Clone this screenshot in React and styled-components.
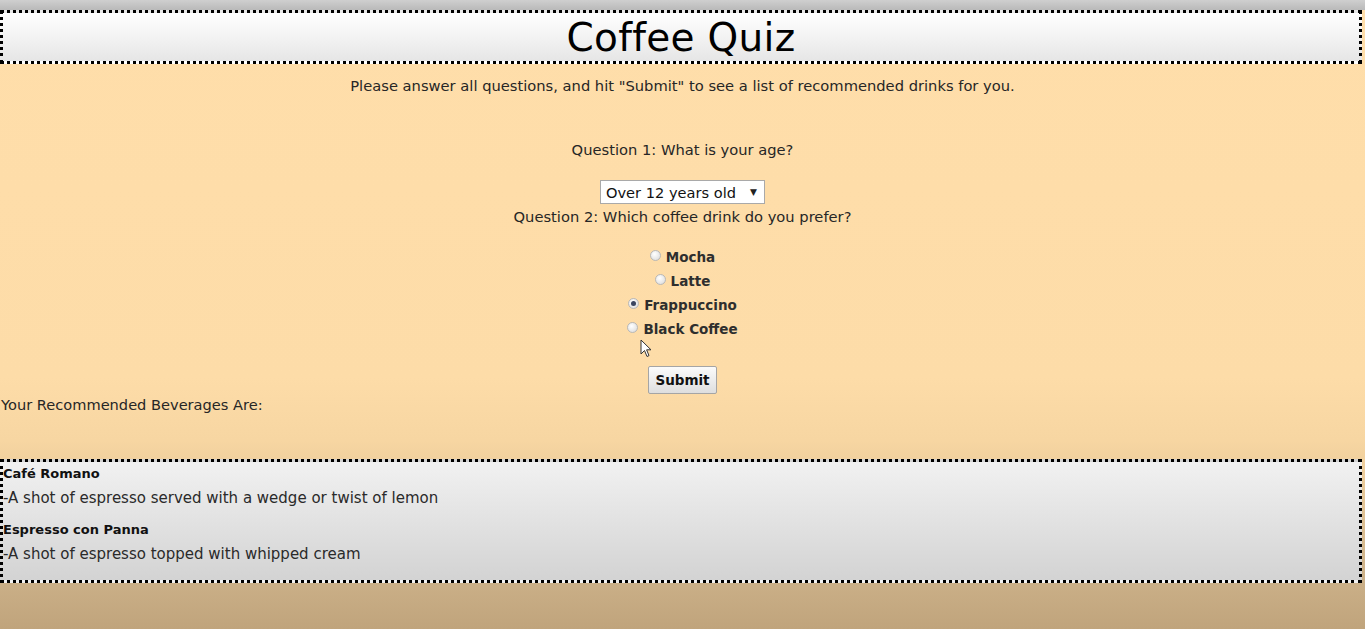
import React from "react";
import styled, { createGlobalStyle } from "styled-components";

const GlobalStyle = createGlobalStyle`
  html, body {
    margin: 0;
    padding: 0;
  }
  body {
    font-family: "DejaVu Sans", "Noto Sans", sans-serif;
    color: #262626;
    background: #c4a982;
  }
`;

const Page = styled.div`
  width: 1365px;
  height: 629px;
  overflow: hidden;
  position: relative;
  background: linear-gradient(
    #ffdeaa 0%,
    #fddca8 60%,
    #f7d6a2 70%,
    #cbb088 92%,
    #c0a47c 100%
  );
`;

const ChromeStrip = styled.div`
  height: 10px;
  background: linear-gradient(#cfcfcf, #b9b9b9);
`;

const Banner = styled.header`
  width: calc(100% - 9px);
  height: 48px;
  border: 3px dotted #000;
  background: linear-gradient(#ffffff, #e6e6e6);
  display: flex;
  justify-content: center;
  align-items: center;
`;

const Title = styled.h1`
  margin: 0;
  font-weight: normal;
  font-size: 39px;
  color: #000;
  letter-spacing: 0.3px;
`;

const Intro = styled.p`
  margin: 12px 0 0;
  text-align: center;
  font-size: 14.7px;
  line-height: 20px;
`;

const Quiz = styled.form`
  display: flex;
  flex-direction: column;
  align-items: center;
  margin-top: 44px;
`;

const Question = styled.div`
  font-size: 14.7px;
  line-height: 20px;
`;

const AgeSelect = styled.div`
  margin-top: 20px;
  width: 165px;
  height: 24px;
  box-sizing: border-box;
  border: 1px solid #a9a9a9;
  background: #fff;
  display: flex;
  align-items: center;
  justify-content: space-between;
  padding: 0 7px 0 5px;
  font-size: 14.6px;
  color: #111;
  margin-bottom: 3px;
`;

const Arrow = styled.span`
  font-size: 9px;
  color: #222;
`;

const Choices = styled.div`
  display: flex;
  flex-direction: column;
  align-items: center;
  margin-top: 18px;
`;

const Choice = styled.label`
  display: flex;
  align-items: center;
  gap: 5px;
  height: 24px;
  font-size: 13.5px;
  font-weight: bold;
  color: #2e2e2e;
`;

const Radio = styled.span`
  width: 11px;
  height: 11px;
  border-radius: 50%;
  box-sizing: border-box;
  border: 1px solid #b8b8b8;
  background: radial-gradient(circle at 40% 35%, #ffffff, #d8d8d8);
  display: flex;
  align-items: center;
  justify-content: center;
  margin-top: -3px;
  &::after {
    content: "";
    width: 5px;
    height: 5px;
    border-radius: 50%;
    background: ${(p) => (p.checked ? "#3a4560" : "transparent")};
  }
`;

const SubmitButton = styled.button`
  margin-top: 25px;
  width: 69px;
  height: 28px;
  border: 1px solid #a5a5a5;
  border-radius: 2px;
  background: linear-gradient(#fbfbfb, #dedede);
  font-family: inherit;
  font-size: 13.5px;
  font-weight: bold;
  color: #111;
  padding: 0;
`;

const ResultsLabel = styled.div`
  margin-top: 1px;
  font-size: 14.6px;
  line-height: 20px;
  padding-left: 1px;
`;

const Results = styled.section`
  margin-top: 44px;
  width: calc(100% - 9px);
  height: 114px;
  border: 3px dotted #000;
  background: linear-gradient(#f1f1f1, #d3d3d3);
  display: flex;
  flex-direction: column;
  padding-top: 4px;
  box-sizing: content-box;
`;

const Drink = styled.div`
  margin-bottom: 14px;
`;

const DrinkName = styled.div`
  font-size: 13px;
  font-weight: bold;
  color: #111;
  line-height: 16px;
`;

const DrinkDesc = styled.div`
  font-size: 15px;
  color: #2a2a2a;
  line-height: 20px;
  margin-top: 6px;
`;

const Cursor = styled.svg`
  position: absolute;
  left: 640px;
  top: 339px;
`;

const drinks = [
  { name: "Café Romano", desc: "-A shot of espresso served with a wedge or twist of lemon" },
  { name: "Espresso con Panna", desc: "-A shot of espresso topped with whipped cream" },
];

const options = [
  { label: "Mocha", checked: false },
  { label: "Latte", checked: false },
  { label: "Frappuccino", checked: true },
  { label: "Black Coffee", checked: false },
];

export default function App() {
  return (
    <Page>
      <GlobalStyle />
      <ChromeStrip />
      <Banner>
        <Title>Coffee Quiz</Title>
      </Banner>
      <Intro>
        Please answer all questions, and hit "Submit" to see a list of recommended drinks for you.
      </Intro>
      <Quiz onSubmit={(e) => e.preventDefault()}>
        <Question>Question 1: What is your age?</Question>
        <AgeSelect>
          <span>Over 12 years old</span>
          <Arrow>▼</Arrow>
        </AgeSelect>
        <Question>Question 2: Which coffee drink do you prefer?</Question>
        <Choices>
          {options.map((o) => (
            <Choice key={o.label}>
              <Radio checked={o.checked} />
              {o.label}
            </Choice>
          ))}
        </Choices>
        <SubmitButton type="submit">Submit</SubmitButton>
      </Quiz>
      <ResultsLabel>Your Recommended Beverages Are:</ResultsLabel>
      <Results>
        {drinks.map((d) => (
          <Drink key={d.name}>
            <DrinkName>{d.name}</DrinkName>
            <DrinkDesc>{d.desc}</DrinkDesc>
          </Drink>
        ))}
      </Results>
      <Cursor width="12" height="19" viewBox="0 0 12 19">
        <path d="M1 1 L1 15 L4.5 11.5 L7 17.5 L9 16.6 L6.6 10.8 L11 10.8 Z" fill="#fff" stroke="#333" strokeWidth="1" strokeLinejoin="round" />
      </Cursor>
    </Page>
  );
}
